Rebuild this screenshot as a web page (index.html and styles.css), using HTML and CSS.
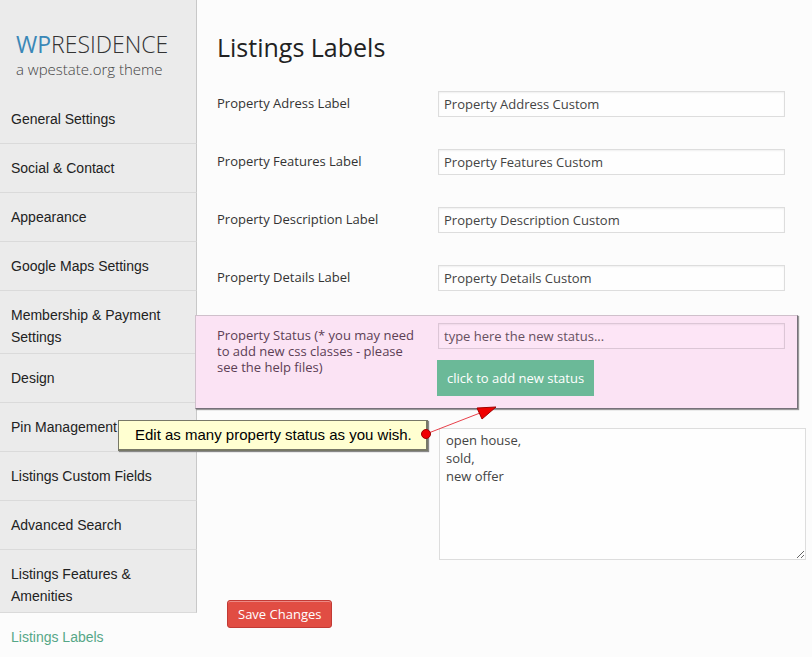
FILE: index.html
```html
<!DOCTYPE html>
<html lang="en">
<head>
<meta charset="utf-8">
<title>Listings Labels</title>
<link rel="stylesheet" href="styles.css">
</head>
<body>
<div class="layout">
  <aside class="sidebar">
    <div class="brand">
      <div class="brand-name"><span class="brand-accent">WP</span>RESIDENCE</div>
      <div class="brand-tagline">a wpestate.org theme</div>
    </div>
    <nav>
      <ul class="menu">
        <li><a href="#">General Settings</a></li>
        <li><a href="#">Social &amp; Contact</a></li>
        <li><a href="#">Appearance</a></li>
        <li><a href="#">Google Maps Settings</a></li>
        <li><a href="#">Membership &amp; Payment Settings</a></li>
        <li><a href="#">Design</a></li>
        <li><a href="#">Pin Management</a></li>
        <li><a href="#">Listings Custom Fields</a></li>
        <li><a href="#">Advanced Search</a></li>
        <li><a href="#">Listings Features &amp; Amenities</a></li>
        <li><a class="active" href="#" aria-current="page">Listings Labels</a></li>
      </ul>
    </nav>
  </aside>
  <main class="content">
    <h1>Listings Labels</h1>
    <form>
      <div class="fields">
        <div class="field">
          <label for="address">Property Adress Label</label>
          <input id="address" type="text" value="Property Address Custom">
        </div>
        <div class="field">
          <label for="features">Property Features Label</label>
          <input id="features" type="text" value="Property Features Custom">
        </div>
        <div class="field">
          <label for="description">Property Description Label</label>
          <input id="description" type="text" value="Property Description Custom">
        </div>
        <div class="field">
          <label for="details">Property Details Label</label>
          <input id="details" type="text" value="Property Details Custom">
        </div>
      </div>
      <div class="status">
        <div class="field">
          <label for="status">Property Status (* you may need to add new css classes - please see the help files)</label>
          <div>
            <input id="status" type="text" value="type here the new status...">
            <button class="add" type="button">click to add new status</button>
          </div>
        </div>
        <div class="callout">Edit as many property status as you wish.
          <svg class="arrow" width="80" height="36" viewBox="0 0 80 36" aria-hidden="true">
            <path d="M6 29 60 8" stroke="#e8404a" fill="none"/>
            <path d="M76 2 57 3 62 14Z" fill="#f00000" stroke="#a00000"/>
            <circle cx="6" cy="29" r="4.500" fill="#f00000" stroke="#a00000"/>
          </svg>
        </div>
      </div>
      <textarea class="list" aria-label="Property status list">open house,
sold,
new offer</textarea>
      <button class="save" type="submit">Save Changes</button>
    </form>
  </main>
</div>
</body>
</html>
```
FILE: styles.css
```css
* {
  box-sizing: border-box;
}

body {
  margin: 0;
  background: #fcfcfc;
  color: #333;
  font: 13px/16px "Open Sans", sans-serif;
}

.layout {
  display: flex;
  align-items: flex-start;
}

.sidebar {
  flex: 0 0 197px;
}

.brand {
  padding: 29px 0 17px 16px;
  background: #ebebeb;
  border-right: 1px solid #c8c8c8;
  font-weight: 300;
}

.brand-name {
  font-size: 23px;
  line-height: 31px;
  color: #333;
}

.brand-accent {
  color: #3a87b7;
  font-weight: 400;
}

.brand-tagline {
  font-size: 15px;
  line-height: 18px;
  color: #444;
}

.menu {
  margin: 0;
  padding: 0;
  list-style: none;
}

.menu a {
  display: block;
  min-height: 49px;
  padding: 13px 24px 5px 11px;
  background: #ebebeb;
  border-right: 1px solid #c8c8c8;
  border-bottom: 1px solid #dadada;
  color: #222;
  font: 14px/22px "Liberation Sans", sans-serif;
  text-decoration: none;
}

.menu a.active {
  min-height: 44px;
  background: none;
  border: 0;
  color: #56a787;
}

.content {
  flex: 1;
  min-width: 0;
  padding: 30px 0 0 20px;
}

h1 {
  margin: 0 0 27px;
  color: #222;
  font-size: 25px;
  font-weight: 400;
  line-height: 34px;
}

.fields {
  display: grid;
  gap: 32px;
  margin-right: 27px;
}

.field {
  display: grid;
  grid-template-columns: 200px 1fr;
  gap: 21px;
}

.field label {
  padding-top: 4px;
}

input,
textarea {
  display: block;
  border: 1px solid #ddd;
  background: #fefefe;
  color: #444;
  font: inherit;
}

input {
  width: 100%;
  height: 26px;
  padding: 0 5px;
  box-shadow: inset 0 1px 2px #0000000f;
}

.status {
  position: relative;
  margin: 24px 14px 0 -22px;
  padding: 7px 12px 12px 21px;
  background: #fbe3f4;
  border: 1px solid #cfc0cb;
  border-right-color: #76717a;
  border-bottom-color: #76717a;
  box-shadow: 1px 1px 1px #999;
}

.status label {
  color: #5c4054;
}

.status input {
  background: #fde5f6;
  border-color: #dcc6d6;
  color: #665060;
}

.add {
  display: block;
  height: 36px;
  margin: 11px 0 0 -1px;
  padding: 0 10px;
  border: 0;
  background: #6bb998;
  color: #fff;
  font: inherit;
}

.callout {
  position: absolute;
  top: 104px;
  left: -78px;
  padding: 3px 14px 3px 16px;
  border: 1px solid #777867;
  border-width: 1px 2px 2px 1px;
  background: #ffffd1;
  box-shadow: 1px 1px 1px #888;
  color: #000;
  font: 15px/22px "Liberation Sans", sans-serif;
  white-space: nowrap;
}

.arrow {
  position: absolute;
  top: -16px;
  left: calc(100% - 6px);
}

.list {
  width: calc(100% - 228px);
  height: 132px;
  margin: 19px 6px 0 222px;
  padding: 2px 6px;
  line-height: 18px;
  resize: both;
}

.save {
  height: 28px;
  margin: 40px 0 0 10px;
  padding: 0 10px;
  border: 1px solid #c23a35;
  border-radius: 3px;
  background: #e14d43;
  box-shadow: inset 0 1px 0 #ec8a85;
  color: #fff;
  font: inherit;
}
```
